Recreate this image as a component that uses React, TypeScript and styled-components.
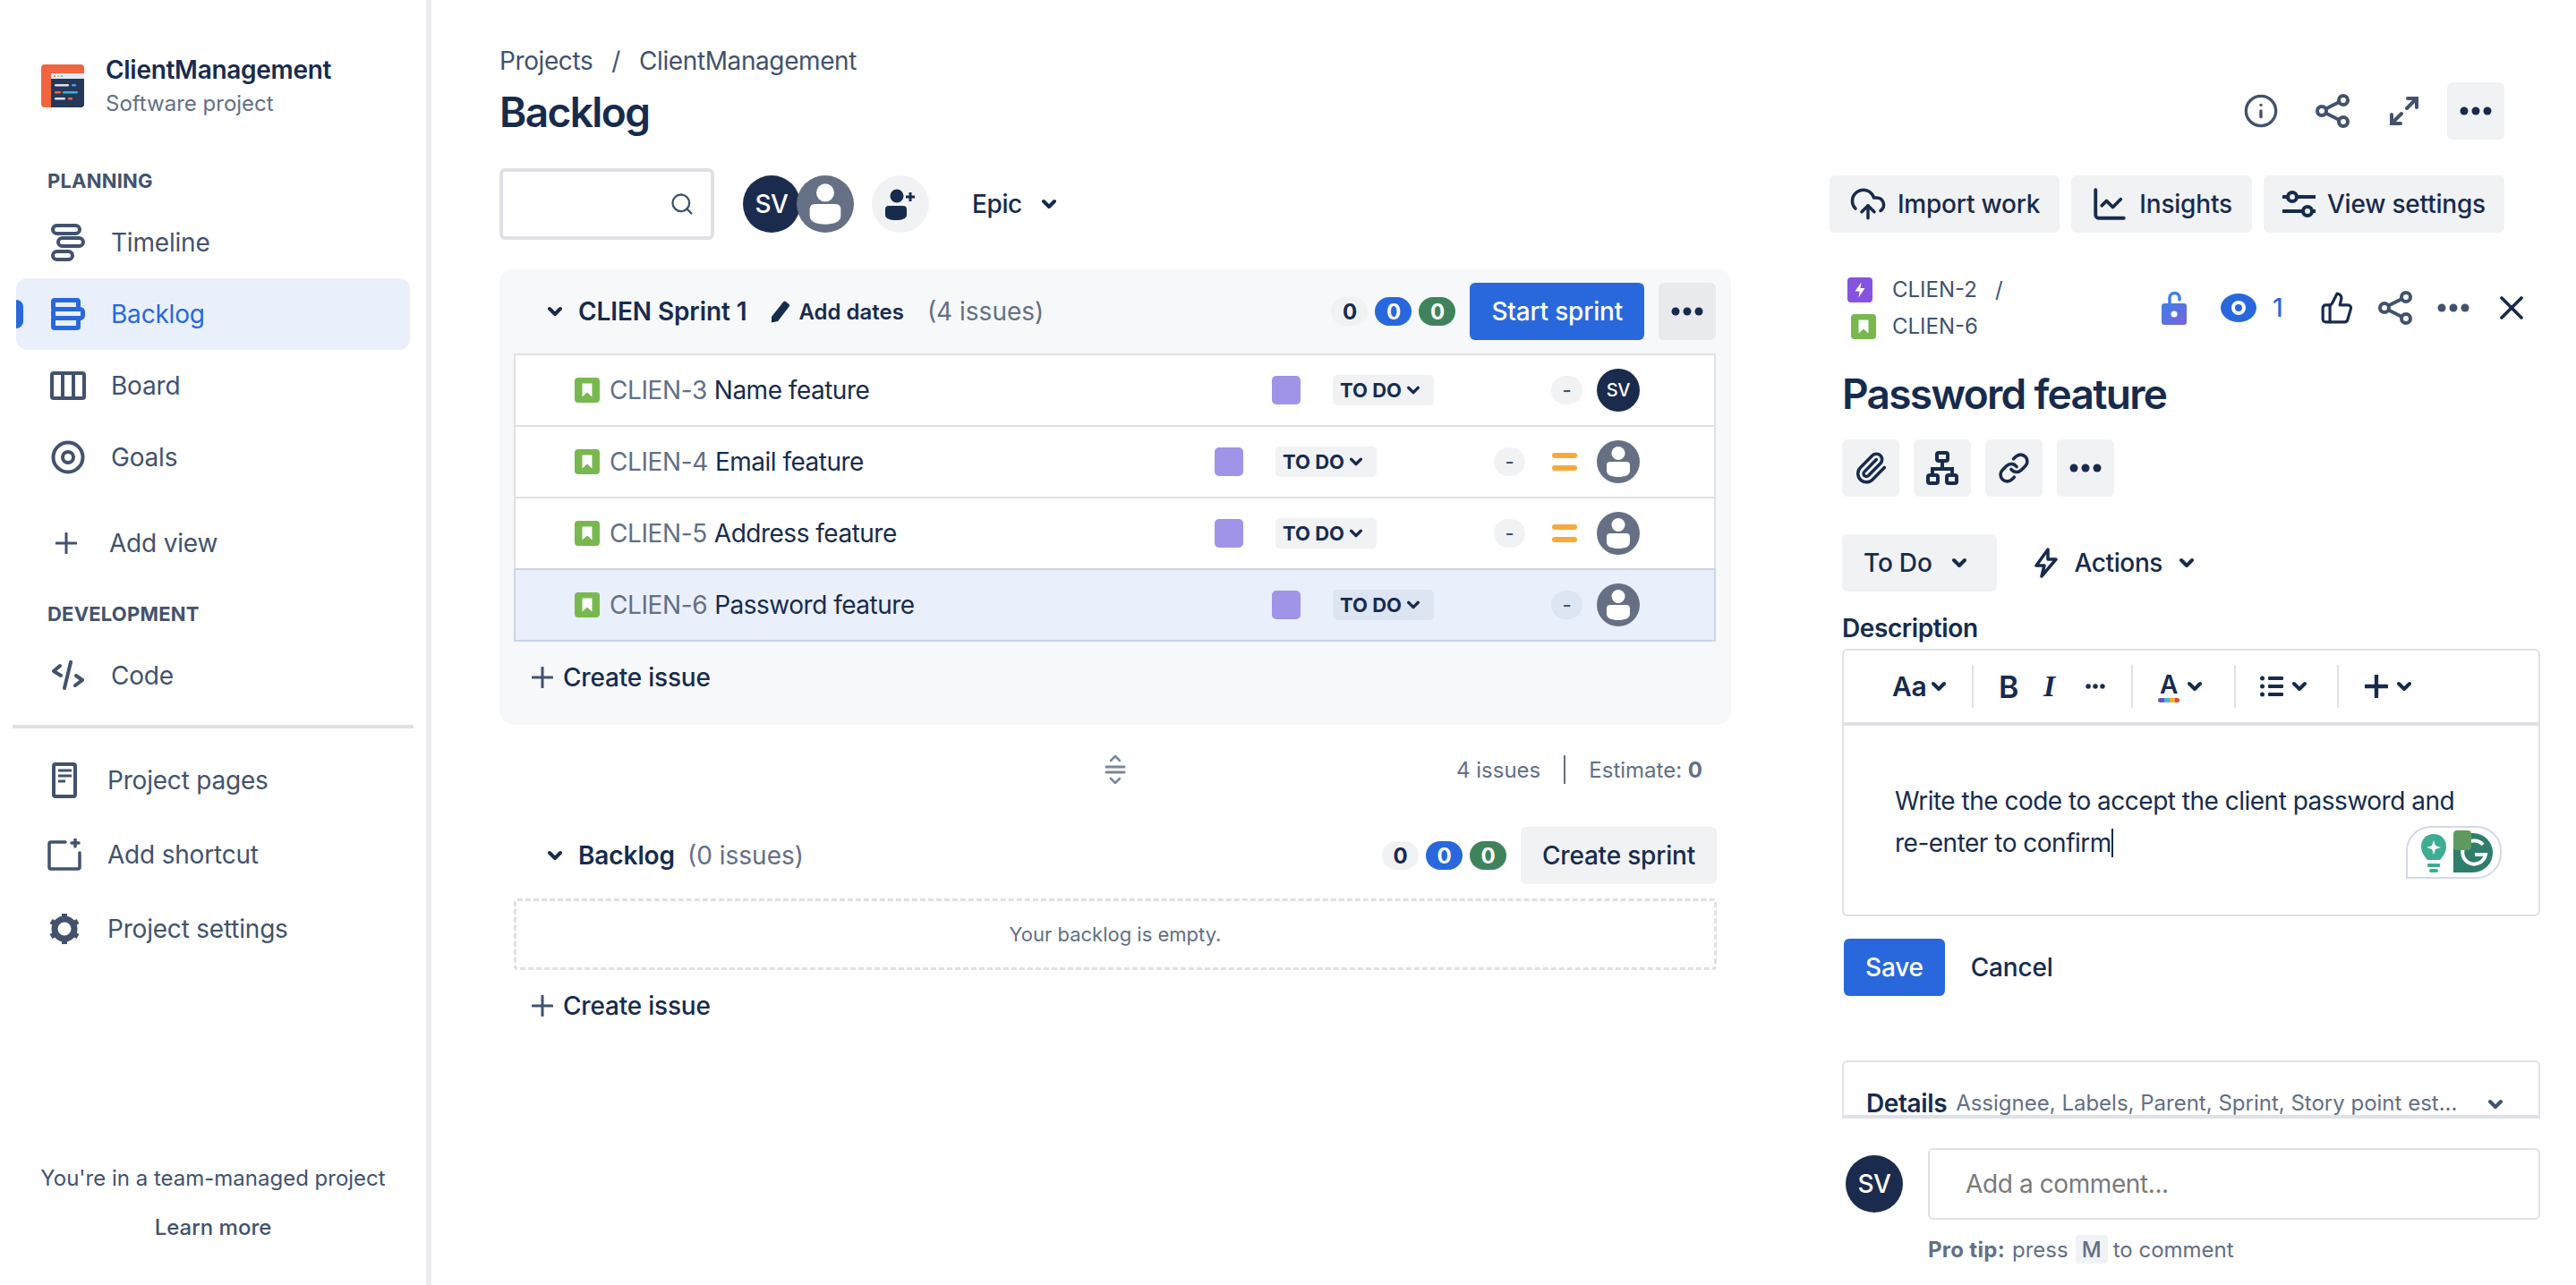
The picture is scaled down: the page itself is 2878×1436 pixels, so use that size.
import React from 'react'
import styled, { createGlobalStyle } from 'styled-components'
import {
  ChartLine,
  CloudUpload,
  Info,
  Link,
  Paperclip,
  Search,
  ThumbsUp,
  X,
} from 'lucide-react'

const ink = '#172b4d'
const slate = '#42526e'
const muted = '#626f86'
const blue = '#2868dc'
const line = '#dfe1e6'
const soft = '#f1f2f4'

const GlobalStyle = createGlobalStyle`
  html, body {
    margin: 0;
    padding: 0;
    background: #fff;
  }
  body {
    font-family: Inter, "Liberation Sans", sans-serif;
    font-size: 28px;
    letter-spacing: -0.4px;
    color: ${ink};
  }
  * {
    box-sizing: border-box;
  }
`

const Page = styled.div`
  display: flex;
  width: 2878px;
  height: 1436px;
  overflow: hidden;
`

/* sidebar */
const Sidebar = styled.nav`
  display: flex;
  flex-direction: column;
  flex: 0 0 482px;
  height: 1436px;
  padding-top: 60px;
  border-right: 6px solid #ebecf0;
`

const ProjectHeader = styled.div`
  display: flex;
  align-items: center;
  gap: 24px;
  height: 72px;
  padding-left: 46px;
`

const ProjectName = styled.div`
  font-weight: 600;
  font-size: 28px;
  line-height: 36px;
  letter-spacing: -0.3px;
`

const ProjectType = styled.div`
  margin-top: 3px;
  font-size: 24px;
  line-height: 33px;
  letter-spacing: 0;
  color: ${muted};
`

const SectionLabel = styled.div<{ $top: number }>`
  margin-top: ${p => p.$top}px;
  padding-left: 53px;
  font-size: 22px;
  font-weight: 700;
  line-height: 28px;
  color: ${slate};
  letter-spacing: 0.2px;
`

const NavList = styled.div<{ $top: number }>`
  display: flex;
  flex-direction: column;
  margin-top: ${p => p.$top}px;
`

const NavRow = styled.div<{ $active?: boolean; $pad?: number; $height?: number }>`
  position: relative;
  display: flex;
  align-items: center;
  gap: 18px;
  width: 440px;
  height: ${p => p.$height ?? 80}px;
  margin-left: 18px;
  padding-left: ${p => p.$pad ?? 28}px;
  border-radius: 12px;
  background: ${p => (p.$active ? '#e9f0fc' : 'transparent')};
  color: ${p => (p.$active ? blue : slate)};
  font-size: 28px;
  letter-spacing: -0.2px;
`

const ActiveMark = styled.span`
  position: absolute;
  left: 0;
  top: 24px;
  width: 8px;
  height: 32px;
  border-radius: 0 8px 8px 0;
  background: ${blue};
`

const NavIcon = styled.span`
  display: flex;
  flex: 0 0 60px;
  align-items: center;
  justify-content: center;
`

const SideDivider = styled.hr`
  width: 448px;
  height: 4px;
  margin: 15px 0 0 14px;
  border: 0;
  background: ${line};
`

const SideFooter = styled.div`
  margin-top: auto;
  padding: 0 0 37px 0;
  font-size: 24px;
  letter-spacing: 0;
  line-height: 55px;
  text-align: center;
  color: ${slate};
`

const LearnMore = styled.div`
  font-weight: 500;
`

/* backlog column */
const Content = styled.main`
  display: flex;
  flex: 1;
  min-width: 0;
`

const BoardColumn = styled.section`
  flex: 0 0 1376px;
  margin-left: 76px;
  padding-top: 48px;
`

const Crumbs = styled.div`
  display: flex;
  gap: 21px;
  font-size: 28px;
  line-height: 40px;
  color: ${slate};
`

const PageTitle = styled.h1`
  margin: 7px 0 0;
  font-size: 46px;
  font-weight: 600;
  letter-spacing: -1.6px;
  line-height: 60px;
  color: ${ink};
`

const Toolbar = styled.div`
  display: flex;
  align-items: center;
  height: 80px;
  margin-top: 33px;
`

const SearchBox = styled.div`
  display: flex;
  align-items: center;
  justify-content: flex-end;
  width: 240px;
  height: 80px;
  padding-right: 18px;
  border: 4px solid ${line};
  border-radius: 6px;
  color: ${slate};
`

const AvatarCircle = styled.div<{ $size: number; $font: number }>`
  display: flex;
  flex: 0 0 auto;
  align-items: center;
  justify-content: center;
  width: ${p => p.$size}px;
  height: ${p => p.$size}px;
  border-radius: 50%;
  background: #1b2b4d;
  color: #fff;
  font-size: ${p => p.$font}px;
  font-weight: 500;
`

const AvatarStack = styled.div`
  display: flex;
  margin-left: 32px;
  & > svg {
    margin-left: -4px;
  }
`

const AddPerson = styled.div`
  display: flex;
  align-items: center;
  justify-content: center;
  width: 64px;
  height: 64px;
  margin-left: 20px;
  border-radius: 50%;
  background: ${soft};
`

const EpicFilter = styled.div`
  display: flex;
  align-items: center;
  gap: 22px;
  margin-left: 48px;
  font-weight: 500;
`

const SprintPanel = styled.div`
  margin-top: 32px;
  padding: 16px 17px 13px 16px;
  border-radius: 16px;
  background: #f7f8f9;
`

const SectionHead = styled.div`
  display: flex;
  align-items: center;
  height: 64px;
  padding-left: 38px;
`

const SectionTitle = styled.span`
  margin-left: 18px;
  font-weight: 600;
  letter-spacing: -0.1px;
`

const AddDates = styled.span`
  display: flex;
  align-items: center;
  gap: 9px;
  margin-left: 27px;
  font-size: 24px;
  font-weight: 600;
  letter-spacing: 0;
`

const IssueCount = styled.span<{ $left: number }>`
  margin-left: ${p => p.$left}px;
  letter-spacing: 0;
  color: ${muted};
`

const Badges = styled.div`
  display: flex;
  gap: 8px;
  margin: 0 16px 0 auto;
`

const Badge = styled.span<{ $bg: string; $fg: string }>`
  display: flex;
  align-items: center;
  justify-content: center;
  width: 41px;
  height: 32px;
  border-radius: 16px;
  background: ${p => p.$bg};
  color: ${p => p.$fg};
  font-size: 24px;
  font-weight: 700;
`

const Button = styled.button<{ $primary?: boolean; $pad?: number }>`
  display: flex;
  flex: 0 0 auto;
  align-items: center;
  gap: 12px;
  height: 64px;
  padding: 0 ${p => p.$pad ?? 24}px;
  border: 0;
  border-radius: 6px;
  background: ${p => (p.$primary ? blue : soft)};
  color: ${p => (p.$primary ? '#fff' : ink)};
  font-family: inherit;
  font-size: 28px;
  font-weight: 500;
  letter-spacing: -0.2px;
`

const StatusButton = styled(Button)`
  gap: 22px;
  padding-right: 34px;
`

const IconButton = styled.button<{ $bg?: string }>`
  display: flex;
  flex: 0 0 64px;
  align-items: center;
  justify-content: center;
  width: 64px;
  height: 64px;
  padding: 0;
  border: 0;
  border-radius: 6px;
  background: ${p => p.$bg ?? soft};
  color: ${ink};
`

const PanelMore = styled(IconButton)`
  margin-left: 16px;
`

const IssueList = styled.div`
  margin-top: 17px;
`

const IssueRow = styled.div<{ $selected?: boolean }>`
  display: flex;
  align-items: center;
  height: 82px;
  margin-top: -2px;
  padding: 0 83px 0 66px;
  border: 2px solid ${p => (p.$selected ? '#c9d5e8' : line)};
  background: ${p => (p.$selected ? '#e9f0fc' : '#fff')};
`

const IssueKey = styled.span`
  margin-left: 11px;
  color: ${muted};
`

const IssueName = styled.span`
  margin-left: 8px;
  letter-spacing: -0.5px;
`

const EpicSwatch = styled.span`
  flex: 0 0 32px;
  height: 32px;
  margin-left: auto;
  border-radius: 5px;
  background: #9f94e8;
`

const StatusPill = styled.span<{ $selected?: boolean }>`
  display: flex;
  flex: 0 0 113px;
  align-items: center;
  gap: 6px;
  height: 34px;
  margin: 0 131px 0 36px;
  padding-left: 8px;
  border-radius: 5px;
  background: ${p => (p.$selected ? '#dde5f2' : soft)};
  font-size: 22px;
  font-weight: 700;
  letter-spacing: 0;
`

const EstimatePill = styled.span<{ $selected?: boolean }>`
  display: flex;
  flex: 0 0 35px;
  align-items: center;
  justify-content: center;
  height: 32px;
  border-radius: 16px;
  background: ${p => (p.$selected ? '#dde5f2' : soft)};
  font-size: 22px;
  font-weight: 500;
  color: ${slate};
`

const Priority = styled.span`
  display: flex;
  flex-direction: column;
  gap: 8px;
  width: 28px;
  margin: 0 22px 0 30px;
  & > i {
    height: 6px;
    border-radius: 3px;
    background: #f6a93b;
  }
`

const RowAvatar = styled.span<{ $flat?: boolean }>`
  display: flex;
  margin-left: ${p => (p.$flat ? 16 : 0)}px;
`

const CreateIssue = styled.div`
  display: flex;
  align-items: center;
  gap: 11px;
  height: 80px;
  padding-left: 20px;
  font-weight: 500;
  letter-spacing: -0.2px;
`

const SprintStats = styled.div`
  display: grid;
  grid-template-columns: 1fr auto 1fr;
  align-items: center;
  height: 32px;
  margin-top: 34px;
  padding: 0 32px;
  font-size: 24px;
  letter-spacing: 0;
  color: ${muted};
  & > svg {
    grid-column: 2;
  }
`

const StatGroup = styled.div`
  display: flex;
  align-items: center;
  justify-content: flex-end;
  grid-column: 3;
`

const StatRule = styled.span`
  width: 2px;
  height: 32px;
  margin: 0 26px;
  background: ${muted};
`

const BacklogBlock = styled.div`
  margin-top: 48px;
  padding: 0 16px;
`

const EmptyBox = styled.div`
  display: flex;
  align-items: center;
  justify-content: center;
  height: 80px;
  margin-top: 16px;
  border: 3px dashed ${line};
  border-radius: 4px;
  font-size: 22px;
  letter-spacing: 0;
  color: ${muted};
`

/* issue detail */
const DetailColumn = styled.aside`
  flex: 1;
  min-width: 0;
  padding: 92px 40px 0 124px;
`

const TopIcons = styled.div`
  display: flex;
  justify-content: flex-end;
  gap: 16px;
  padding-right: 40px;
  color: ${slate};
`

const PlainIcon = styled.span`
  display: flex;
  flex: 0 0 64px;
  align-items: center;
  justify-content: center;
  height: 64px;
`

const TopActions = styled.div`
  display: flex;
  justify-content: flex-end;
  gap: 13px;
  margin-top: 40px;
  padding-right: 40px;
`

const DetailHead = styled.div`
  display: flex;
  align-items: center;
  justify-content: space-between;
  margin-top: 43px;
`

const ParentCrumbs = styled.div`
  display: flex;
  flex-direction: column;
  font-size: 24px;
  letter-spacing: 0;
  line-height: 41px;
  color: ${slate};
`

const ParentLine = styled.div<{ $pad: number }>`
  display: flex;
  align-items: center;
  gap: ${p => 28 - p.$pad}px;
  padding-left: ${p => p.$pad}px;
`

const CrumbSlash = styled.span`
  margin-left: -2px;
`

const HeadIcons = styled.div`
  display: flex;
  align-items: center;
  color: ${slate};
`

const HeadIcon = styled.span<{ $w: number }>`
  display: flex;
  flex: 0 0 ${p => p.$w}px;
  align-items: center;
  justify-content: center;
  height: 48px;
`

const Watchers = styled.span`
  display: flex;
  align-items: center;
  gap: 18px;
  width: 107px;
  padding-left: 10px;
  color: ${blue};
  font-size: 28px;
  font-weight: 500;
`

const DetailTitle = styled.h2`
  margin: 25px 0 0;
  font-size: 46px;
  font-weight: 600;
  letter-spacing: -1.7px;
  line-height: 60px;
`

const QuickRow = styled.div`
  display: flex;
  gap: 16px;
  margin-top: 21px;
`

const StatusRow = styled.div`
  display: flex;
  align-items: center;
  margin-top: 42px;
`

const ActionsLabel = styled.span`
  display: flex;
  align-items: center;
  gap: 19px;
  margin-left: 42px;
  font-weight: 500;
`

const FieldLabel = styled.div`
  margin-top: 24px;
  font-size: 28px;
  font-weight: 600;
  line-height: 34px;
`

const Editor = styled.div`
  position: relative;
  height: 299px;
  margin-top: 6px;
  border: 2px solid ${line};
  border-radius: 6px;
`

const EditorBar = styled.div`
  display: flex;
  align-items: center;
  height: 84px;
  border-bottom: 4px solid ${line};
`

const BarGroup = styled.div<{ $w: number; $pad: number; $last?: boolean }>`
  display: flex;
  align-items: center;
  width: ${p => p.$w}px;
  height: 48px;
  padding-left: ${p => p.$pad}px;
  border-right: ${p => (p.$last ? 0 : `2px solid ${line}`)};
`

const BarText = styled.span<{ $italic?: boolean; $w?: number }>`
  width: ${p => (p.$w ? `${p.$w}px` : 'auto')};
  font-family: ${p => (p.$italic ? '"Liberation Serif", serif' : 'inherit')};
  font-style: ${p => (p.$italic ? 'italic' : 'normal')};
  font-size: ${p => (p.$w === 44 ? 30 : 34)}px;
  font-weight: 600;
`

const BarSpacer = styled.span`
  width: 10px;
`

const ColorA = styled.span`
  display: flex;
  flex-direction: column;
  align-items: center;
  width: 24px;
  margin-right: 9px;
  font-size: 28px;
  font-weight: 600;
  line-height: 30px;
  & > i {
    width: 24px;
    height: 5px;
    border-radius: 3px;
    background: linear-gradient(90deg, #6554c0 0 30%, #4fb3d9 30% 55%, #f6a93b 55% 78%, #de4c2c 78%);
  }
`

const EditorText = styled.div`
  padding: 61px 40px 0 57px;
  font-size: 28px;
  letter-spacing: -0.5px;
  line-height: 47px;
`

const Caret = styled.span`
  display: inline-block;
  width: 2px;
  height: 32px;
  vertical-align: -6px;
  background: ${ink};
`

const GrammarlyBadge = styled.div`
  position: absolute;
  right: 41px;
  bottom: 40px;
  display: flex;
  align-items: center;
  justify-content: space-between;
  width: 107px;
  height: 59px;
  padding: 0 8px 0 14px;
  border: 2px solid #d5d9e6;
  border-radius: 28px 28px 28px 0;
  background: #fff;
`

const GrammarlyHandle = styled.span`
  position: absolute;
  left: 51px;
  top: 3px;
  width: 20px;
  height: 22px;
  border-radius: 4px;
  background: #5f9b61;
`

const SaveRow = styled.div`
  display: flex;
  align-items: center;
  gap: 29px;
  margin-top: 25px;
  padding-left: 2px;
`

const CancelLabel = styled.span`
  font-weight: 500;
  letter-spacing: -0.2px;
`

const DetailsBox = styled.div`
  display: flex;
  align-items: flex-end;
  height: 65px;
  margin-top: 72px;
  padding: 0 40px 0 25px;
  border: 2px solid ${line};
  border-bottom: 4px solid ${line};
  border-radius: 6px 6px 0 0;
  line-height: 26px;
  white-space: nowrap;
`

const DetailsName = styled.span`
  font-weight: 600;
`

const DetailsHint = styled.span`
  margin-left: 10px;
  font-size: 24px;
  letter-spacing: 0;
  color: ${muted};
`

const DetailsChevron = styled.span`
  display: flex;
  align-self: center;
  margin: 34px 0 0 auto;
`

const CommentRow = styled.div`
  display: flex;
  align-items: center;
  gap: 28px;
  margin-top: 33px;
  padding-left: 4px;
`

const CommentInput = styled.div`
  display: flex;
  flex: 1;
  align-items: center;
  height: 80px;
  padding-left: 40px;
  border: 2px solid ${line};
  border-radius: 6px;
  color: #7a7a7a;
`

const ProTip = styled.div`
  display: flex;
  align-items: center;
  margin-top: 17px;
  padding-left: 96px;
  font-size: 24px;
  letter-spacing: 0;
  color: ${muted};
  & > b {
    margin-right: 8px;
    font-weight: 700;
    letter-spacing: 0.3px;
  }
`

const KeyCap = styled.span`
  display: flex;
  align-items: center;
  justify-content: center;
  width: 36px;
  height: 32px;
  margin: 0 6px 0 8px;
  border-radius: 4px;
  background: ${soft};
  font-weight: 500;
`

/* drawings */
const Chevron = ({ size = 16, stroke = 4, color = ink }: { size?: number; stroke?: number; color?: string }) => (
  <svg width={size} height={size} viewBox="0 0 16 16" fill="none">
    <path d="M2 5l6 6 6-6" stroke={color} strokeWidth={stroke} strokeLinecap="round" strokeLinejoin="round" />
  </svg>
)

const Dots = ({ color = ink, width = 36 }: { color?: string; width?: number }) => (
  <svg width={width} height={10} viewBox="0 0 36 10" fill={color}>
    <circle cx="5" cy="5" r="4.5" />
    <circle cx="18" cy="5" r="4.5" />
    <circle cx="31" cy="5" r="4.5" />
  </svg>
)

const Plus = ({ size = 24, stroke = 3, color = slate }: { size?: number; stroke?: number; color?: string }) => (
  <svg width={size} height={size} viewBox="0 0 24 24" fill="none">
    <path d="M12 1v22M1 12h22" stroke={color} strokeWidth={stroke} strokeLinecap="round" />
  </svg>
)

const PersonAvatar = ({ size }: { size: number }) => (
  <svg width={size} height={size} viewBox="0 0 48 48">
    <circle cx="24" cy="24" r="24" fill="#667085" />
    <circle cx="24" cy="14.5" r="7.5" fill="#fff" />
    <path d="M11 28a4 4 0 0 1 4-4h18a4 4 0 0 1 4 4v6c0 5-6 7-13 7s-13-2-13-7z" fill="#fff" />
  </svg>
)

const StoryIcon = () => (
  <svg width="28" height="28" viewBox="0 0 28 28">
    <rect width="28" height="28" rx="4" fill="#78b84f" />
    <path d="M8.5 6.5h11v15l-5.500-5-5.500 5z" fill="#fff" />
  </svg>
)

const EpicIcon = () => (
  <svg width="28" height="28" viewBox="0 0 28 28">
    <rect width="28" height="28" rx="4" fill="#8553e0" />
    <path d="M15.500 5.500L8.500 15.500h5L12.500 22.500l7-10.500h-5z" fill="#fff" />
  </svg>
)

const ProjectLogo = () => (
  <svg width="48" height="48" viewBox="0 0 48 48">
    <rect width="48" height="48" rx="4" fill="#f0653f" />
    <path d="M11 10h37v34a4 4 0 0 1-4 4H11z" fill="#253858" />
    <rect x="11" y="10" width="37" height="6" fill="#e6ecf5" />
    <circle cx="15" cy="13" r="1" fill="#f0653f" />
    <circle cx="19" cy="13" r="1" fill="#f6a93b" />
    <circle cx="23" cy="13" r="1" fill="#36b3d6" />
    <rect x="15" y="22" width="16" height="2.500" rx="1" fill="#dfe1e6" />
    <rect x="34" y="22" width="5" height="2.500" rx="1" fill="#4c9aff" />
    <rect x="15" y="30" width="7" height="2.500" rx="1" fill="#f0653f" />
    <rect x="24" y="30" width="17" height="2.500" rx="1" fill="#36b3d6" />
    <rect x="15" y="37" width="12" height="2.500" rx="1" fill="#dfe1e6" />
    <rect x="30" y="37" width="5" height="2.500" rx="1" fill="#f0653f" />
  </svg>
)

const TimelineIcon = () => (
  <svg width="38" height="42" viewBox="0 0 38 42" fill="none" stroke={slate} strokeWidth="4">
    <rect x="2" y="2" width="30" height="9" rx="4.500" />
    <rect x="8" y="16" width="28" height="9" rx="4.500" />
    <rect x="2" y="31" width="22" height="9" rx="4.500" />
  </svg>
)

const BacklogIcon = () => (
  <svg width="38" height="36" viewBox="0 0 38 36" fill="none" stroke={blue} strokeWidth="5" strokeLinejoin="round">
    <rect x="2.500" y="2.500" width="28" height="10" rx="1.500" />
    <rect x="2.500" y="12.500" width="33" height="10" rx="3" />
    <rect x="2.500" y="22.500" width="28" height="11" rx="1.500" />
  </svg>
)

const BoardIcon = () => (
  <svg width="40" height="32" viewBox="0 0 40 32" fill="none" stroke={slate} strokeWidth="4">
    <rect x="2" y="2" width="36" height="28" rx="2" />
    <path d="M14 2v28M26 2v28" />
  </svg>
)

const GoalsIcon = () => (
  <svg width="38" height="38" viewBox="0 0 38 38" fill="none" stroke={slate} strokeWidth="4">
    <circle cx="19" cy="19" r="16.500" />
    <circle cx="19" cy="19" r="6" />
  </svg>
)

const CodeIcon = () => (
  <svg width="36" height="34" viewBox="0 0 36 34" fill="none" stroke={slate} strokeWidth="4" strokeLinecap="round" strokeLinejoin="round">
    <path d="M9 6L2 12l8 5M27 17l7 5-8 6M21 2l-7 29" />
  </svg>
)

const PagesIcon = () => (
  <svg width="28" height="40" viewBox="0 0 28 40" fill="none">
    <rect x="2" y="2" width="24" height="36" rx="2" stroke={slate} strokeWidth="4" />
    <path d="M7 9h15M7 15h15M7 21h8" stroke={slate} strokeWidth="3" />
  </svg>
)

const ShortcutIcon = () => (
  <svg width="38" height="36" viewBox="0 0 38 36" fill="none" stroke={slate} strokeWidth="3.500" strokeLinecap="round">
    <path d="M20 4H4a2 2 0 0 0-2 2v26a2 2 0 0 0 2 2h30a2 2 0 0 0 2-2V16" />
    <path d="M31 1v8M27 5h8" />
  </svg>
)

const GearIcon = () => (
  <svg width="36" height="36" viewBox="0 0 36 36" fill="none">
    <circle cx="18" cy="18" r="11" stroke={slate} strokeWidth="7" />
    <g stroke={slate} strokeWidth="6">
      <path d="M18 1v5M18 30v5M3 9.500l4.500 2.500M28.500 24l4.500 2.500M3 26.500L7.500 24M28.500 12L33 9.500" />
    </g>
  </svg>
)

const PencilIcon = () => (
  <svg width="22" height="26" viewBox="0 0 22 26" fill={ink}>
    <path d="M14 2.500a2 2 0 0 1 2.800-.4l3.500 2.600a2 2 0 0 1 .4 2.800L8 24 1 25.500 1 19z" />
  </svg>
)

const AddPersonIcon = () => (
  <svg width="34" height="36" viewBox="0 0 34 36" fill={ink}>
    <circle cx="13" cy="9" r="7.500" />
    <path d="M0 24a4 4 0 0 1 4-4h16a4 4 0 0 1 4 4v6c0 4-5 6-12 6S0 34 0 30z" />
    <path d="M28 5v10M23 10h10" stroke={ink} strokeWidth="3" />
  </svg>
)

const ExpandIcon = () => (
  <svg width="32" height="32" viewBox="0 0 32 32" fill="none" stroke={slate} strokeWidth="4" strokeLinecap="round">
    <path d="M19 13l11-11M20 2h10v10M13 19L2 30M2 20v10h10" />
  </svg>
)

const CollapseIcon = () => (
  <svg width="24" height="32" viewBox="0 0 24 32" fill="none" stroke="#7a869a" strokeWidth="2.500" strokeLinecap="round" strokeLinejoin="round">
    <path d="M7 6l5-5 5 5M7 26l5 5 5-5" />
    <path d="M2 13h20M2 19h20" strokeWidth="3" />
  </svg>
)

const ShareIcon = () => (
  <svg width="38" height="38" viewBox="0 0 38 38" fill="none" stroke={slate} strokeWidth="4">
    <circle cx="31" cy="7" r="5" />
    <circle cx="7" cy="19" r="5" />
    <circle cx="31" cy="31" r="5" />
    <path d="M11.500 16.500L26.500 9M11.500 21.500L26.500 29" />
  </svg>
)

const SettingsIcon = () => (
  <svg width="38" height="30" viewBox="0 0 38 30" fill="#f1f2f4" stroke={ink} strokeWidth="4">
    <path d="M0 7h37M0 23h37" />
    <circle cx="11" cy="7" r="5" />
    <circle cx="28" cy="23" r="5" />
  </svg>
)

const LockIcon = () => (
  <svg width="28" height="38" viewBox="0 0 28 38">
    <defs>
      <linearGradient id="lockFill" x1="0" y1="0" x2="1" y2="1">
        <stop offset="0" stopColor="#3f7fe8" />
        <stop offset="1" stopColor="#7a63d8" />
      </linearGradient>
    </defs>
    <path d="M9 15V8a5.500 5.500 0 0 1 11 0v2" fill="none" stroke="#3f7fe8" strokeWidth="3.500" strokeLinecap="round" />
    <rect y="14" width="28" height="24" rx="3" fill="url(#lockFill)" />
    <circle cx="14" cy="26" r="3.500" fill="#fff" />
  </svg>
)

const EyeIcon = () => (
  <svg width="40" height="32" viewBox="0 0 40 32">
    <ellipse cx="20" cy="16" rx="20" ry="16" fill={blue} />
    <circle cx="20" cy="16" r="8" fill="#fff" />
    <circle cx="20" cy="16" r="4" fill={blue} />
  </svg>
)

const HierarchyIcon = () => (
  <svg width="36" height="38" viewBox="0 0 36 38" fill="none" stroke={ink} strokeWidth="4">
    <rect x="12" y="2" width="12" height="9" rx="2" />
    <path d="M18 11v9M7 26v-6h22v6" />
    <rect x="2" y="27" width="11" height="9" rx="2" />
    <rect x="23" y="27" width="11" height="9" rx="2" />
  </svg>
)

const BoltIcon = () => (
  <svg width="26" height="34" viewBox="0 0 26 34" fill="none" stroke={ink} strokeWidth="3.500" strokeLinejoin="round">
    <path d="M15 2L2 20h9l-3 12 16-19h-9z" />
  </svg>
)

const ListIcon = () => (
  <svg width="26" height="24" viewBox="0 0 26 24" fill={ink}>
    <circle cx="2.500" cy="3" r="2.500" />
    <circle cx="2.500" cy="12" r="2.500" />
    <circle cx="2.500" cy="21" r="2.500" />
    <rect x="9" y="1" width="17" height="4" rx="1" />
    <rect x="9" y="10" width="17" height="4" rx="1" />
    <rect x="9" y="19" width="17" height="4" rx="1" />
  </svg>
)

const BulbIcon = () => (
  <svg width="30" height="44" viewBox="0 0 30 44">
    <path d="M15 1C7 1 1 7 1 15c0 6 3 10 7 15h14c4-5 7-9 7-15 0-8-6-14-14-14z" fill="#3fad92" />
    <path d="M15 8l2 6 6 2-6 2-2 6-2-6-6-2 6-2z" fill="#fff" />
    <rect x="8" y="34" width="14" height="4" rx="1" fill="#3fad92" />
    <rect x="10" y="40" width="10" height="4" rx="2" fill="#3fad92" />
  </svg>
)

const GrammarlyMark = () => (
  <svg width="44" height="44" viewBox="0 0 44 44">
    <path d="M0 0h22a22 22 0 0 1 0 44H0z" fill="#2f7d6b" />
    <path d="M33 13a13 13 0 1 0 3 11H24" fill="none" stroke="#fff" strokeWidth="4" />
  </svg>
)

const Badge3 = () => (
  <Badges>
    <Badge $bg={soft} $fg={ink}>0</Badge>
    <Badge $bg={blue} $fg="#fff">0</Badge>
    <Badge $bg="#3f835c" $fg="#fff">0</Badge>
  </Badges>
)

const navTop = [
  { label: 'Timeline', icon: <TimelineIcon /> },
  { label: 'Backlog', icon: <BacklogIcon />, active: true },
  { label: 'Board', icon: <BoardIcon /> },
  { label: 'Goals', icon: <GoalsIcon /> },
]

const navBottom = [
  { label: 'Project pages', icon: <PagesIcon /> },
  { label: 'Add shortcut', icon: <ShortcutIcon /> },
  { label: 'Project settings', icon: <GearIcon /> },
]

const issues = [
  { key: 'CLIEN-3', name: 'Name feature', priority: false, owner: true },
  { key: 'CLIEN-4', name: 'Email feature', priority: true },
  { key: 'CLIEN-5', name: 'Address feature', priority: true },
  { key: 'CLIEN-6', name: 'Password feature', priority: false, selected: true },
]

export default function App() {
  return (
    <Page>
      <GlobalStyle />
      <Sidebar>
        <ProjectHeader>
          <ProjectLogo />
          <div>
            <ProjectName>ClientManagement</ProjectName>
            <ProjectType>Software project</ProjectType>
          </div>
        </ProjectHeader>
        <SectionLabel $top={56}>PLANNING</SectionLabel>
        <NavList $top={15}>
          {navTop.map(item => (
            <NavRow key={item.label} $active={item.active}>
              {item.active && <ActiveMark />}
              <NavIcon>{item.icon}</NavIcon>
              {item.label}
            </NavRow>
          ))}
        </NavList>
        <NavList $top={16}>
          <NavRow $pad={26}>
            <NavIcon>
              <Plus />
            </NavIcon>
            Add view
          </NavRow>
        </NavList>
        <SectionLabel $top={25}>DEVELOPMENT</SectionLabel>
        <NavList $top={15}>
          <NavRow>
            <NavIcon>
              <CodeIcon />
            </NavIcon>
            Code
          </NavRow>
        </NavList>
        <SideDivider />
        <NavList $top={16}>
          {navBottom.map(item => (
            <NavRow key={item.label} $pad={24} $height={83}>
              <NavIcon>{item.icon}</NavIcon>
              {item.label}
            </NavRow>
          ))}
        </NavList>
        <SideFooter>
          You're in a team-managed project
          <LearnMore>Learn more</LearnMore>
        </SideFooter>
      </Sidebar>

      <Content>
        <BoardColumn>
          <Crumbs>
            <span>Projects</span>
            <span>/</span>
            <span>ClientManagement</span>
          </Crumbs>
          <PageTitle>Backlog</PageTitle>
          <Toolbar>
            <SearchBox>
              <Search size={28} strokeWidth={2} />
            </SearchBox>
            <AvatarStack>
              <AvatarCircle $size={64} $font={28}>SV</AvatarCircle>
              <PersonAvatar size={64} />
            </AvatarStack>
            <AddPerson>
              <AddPersonIcon />
            </AddPerson>
            <EpicFilter>
              Epic
              <Chevron />
            </EpicFilter>
          </Toolbar>

          <SprintPanel>
            <SectionHead>
              <Chevron />
              <SectionTitle>CLIEN Sprint 1</SectionTitle>
              <AddDates>
                <PencilIcon />
                Add dates
              </AddDates>
              <IssueCount $left={26}>(4 issues)</IssueCount>
              <Badge3 />
              <Button $primary>Start sprint</Button>
              <PanelMore $bg="#e9eaed">
                <Dots />
              </PanelMore>
            </SectionHead>
            <IssueList>
              {issues.map(issue => (
                <IssueRow key={issue.key} $selected={issue.selected}>
                  <StoryIcon />
                  <IssueKey>{issue.key}</IssueKey>
                  <IssueName>{issue.name}</IssueName>
                  <EpicSwatch />
                  <StatusPill $selected={issue.selected}>
                    TO DO
                    <Chevron size={14} />
                  </StatusPill>
                  <EstimatePill $selected={issue.selected}>-</EstimatePill>
                  {issue.priority && (
                    <Priority>
                      <i />
                      <i />
                    </Priority>
                  )}
                  <RowAvatar $flat={!issue.priority}>
                    {issue.owner ? (
                      <AvatarCircle $size={48} $font={20}>SV</AvatarCircle>
                    ) : (
                      <PersonAvatar size={48} />
                    )}
                  </RowAvatar>
                </IssueRow>
              ))}
            </IssueList>
            <CreateIssue>
              <Plus />
              Create issue
            </CreateIssue>
          </SprintPanel>

          <SprintStats>
            <CollapseIcon />
            <StatGroup>
              4 issues
              <StatRule />
              Estimate:&nbsp;<b>0</b>
            </StatGroup>
          </SprintStats>

          <BacklogBlock>
            <SectionHead>
              <Chevron />
              <SectionTitle>Backlog</SectionTitle>
              <IssueCount $left={14}>(0 issues)</IssueCount>
              <Badge3 />
              <Button>Create sprint</Button>
            </SectionHead>
            <EmptyBox>Your backlog is empty.</EmptyBox>
            <CreateIssue>
              <Plus />
              Create issue
            </CreateIssue>
          </BacklogBlock>
        </BoardColumn>

        <DetailColumn>
          <TopIcons>
            <PlainIcon>
              <Info size={40} strokeWidth={2} />
            </PlainIcon>
            <PlainIcon>
              <ShareIcon />
            </PlainIcon>
            <PlainIcon>
              <ExpandIcon />
            </PlainIcon>
            <IconButton>
              <Dots />
            </IconButton>
          </TopIcons>
          <TopActions>
            <Button $pad={22}>
              <CloudUpload size={42} strokeWidth={2} />
              Import work
            </Button>
            <Button $pad={22}>
              <ChartLine size={42} strokeWidth={2.200} />
              Insights
            </Button>
            <Button $pad={21}>
              <SettingsIcon />
              View settings
            </Button>
          </TopActions>

          <DetailHead>
            <ParentCrumbs>
              <ParentLine $pad={6}>
                <EpicIcon />
                CLIEN-2
                <CrumbSlash>/</CrumbSlash>
              </ParentLine>
              <ParentLine $pad={10}>
                <StoryIcon />
                CLIEN-6
              </ParentLine>
            </ParentCrumbs>
            <HeadIcons>
              <HeadIcon $w={84}>
                <LockIcon />
              </HeadIcon>
              <Watchers>
                <EyeIcon />1
              </Watchers>
              <HeadIcon $w={65}>
                <ThumbsUp size={38} strokeWidth={2} color={ink} />
              </HeadIcon>
              <HeadIcon $w={65}>
                <ShareIcon />
              </HeadIcon>
              <HeadIcon $w={65}>
                <Dots color={slate} />
              </HeadIcon>
              <HeadIcon $w={65}>
                <X size={44} strokeWidth={2} color={ink} />
              </HeadIcon>
            </HeadIcons>
          </DetailHead>

          <DetailTitle>Password feature</DetailTitle>
          <QuickRow>
            <IconButton>
              <Paperclip size={38} strokeWidth={2.200} />
            </IconButton>
            <IconButton>
              <HierarchyIcon />
            </IconButton>
            <IconButton>
              <Link size={36} strokeWidth={2.400} />
            </IconButton>
            <IconButton>
              <Dots />
            </IconButton>
          </QuickRow>

          <StatusRow>
            <StatusButton $pad={24}>
              To Do
              <Chevron />
            </StatusButton>
            <ActionsLabel>
              <BoltIcon />
              Actions
              <Chevron />
            </ActionsLabel>
          </StatusRow>

          <FieldLabel>Description</FieldLabel>
          <Editor>
            <EditorBar>
              <BarGroup $w={145} $pad={54}>
                <BarText $w={44}>Aa</BarText>
                <Chevron />
              </BarGroup>
              <BarGroup $w={178} $pad={28}>
                <BarText $w={50}>B</BarText>
                <BarText $italic $w={47}>I</BarText>
                <Dots width={22} />
              </BarGroup>
              <BarGroup $w={115} $pad={28}>
                <ColorA>
                  A
                  <i />
                </ColorA>
                <Chevron />
              </BarGroup>
              <BarGroup $w={115} $pad={27}>
                <ListIcon />
                <BarSpacer />
                <Chevron />
              </BarGroup>
              <BarGroup $w={120} $pad={29} $last>
                <Plus size={26} stroke={4} color={ink} />
                <BarSpacer />
                <Chevron />
              </BarGroup>
            </EditorBar>
            <EditorText>
              Write the code to accept the client password and
              <br />
              re-enter to confirm
              <Caret />
            </EditorText>
            <GrammarlyBadge>
              <BulbIcon />
              <GrammarlyMark />
              <GrammarlyHandle />
            </GrammarlyBadge>
          </Editor>

          <SaveRow>
            <Button $primary>Save</Button>
            <CancelLabel>Cancel</CancelLabel>
          </SaveRow>

          <DetailsBox>
            <DetailsName>Details</DetailsName>
            <DetailsHint>Assignee, Labels, Parent, Sprint, Story point est...</DetailsHint>
            <DetailsChevron>
              <Chevron color={slate} />
            </DetailsChevron>
          </DetailsBox>

          <CommentRow>
            <AvatarCircle $size={64} $font={28}>SV</AvatarCircle>
            <CommentInput>Add a comment...</CommentInput>
          </CommentRow>
          <ProTip>
            <b>Pro tip:</b>
            press
            <KeyCap>M</KeyCap>
            to comment
          </ProTip>
        </DetailColumn>
      </Content>
    </Page>
  )
}
